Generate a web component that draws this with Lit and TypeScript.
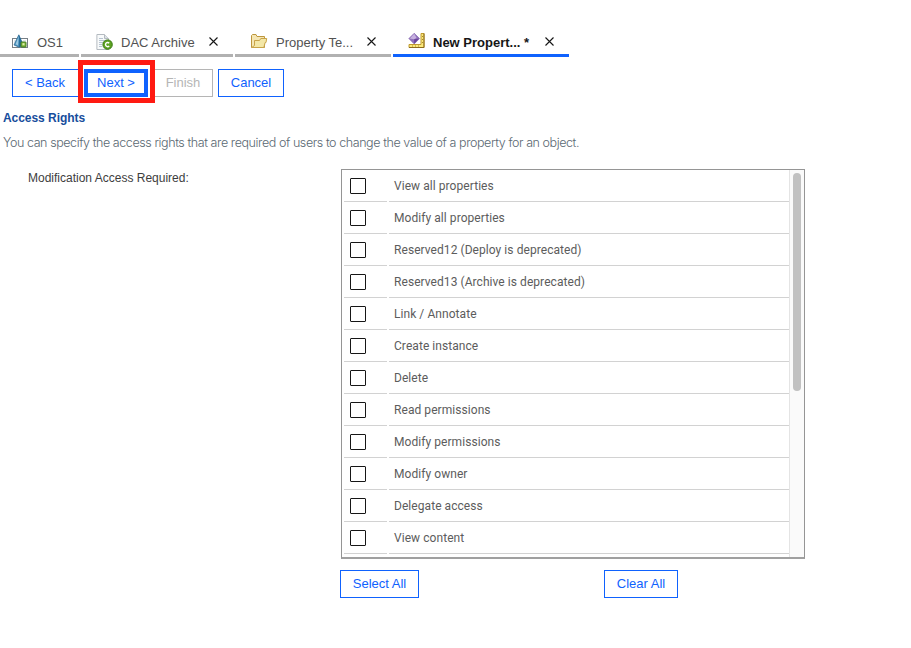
import { LitElement, html, css, svg } from "lit";
import { customElement, property } from "lit/decorators.js";

const serverIcon = svg`
  <rect x=".5" y="4.5" width="15" height="9" fill="#fff" stroke="#777f86"/>
  <path d="M2 6h3v3H2zM11 6h3v1h-3z" fill="#dfe6ea"/>
  <path d="M2 11L6.8 .8L11.2 11L7 13.2Z" fill="#4c92bd" stroke="#28668f" stroke-width=".7"/>
  <path d="M7 1L11.2 11L7 13.2Z" fill="#276c99"/>
  <path d="M6.6 2.4L3.6 10.2L6 11.4Z" fill="#9cc9e2"/>
  <rect x="9" y="8" width="5" height="5" rx=".5" fill="#82b83e" stroke="#3f791f"/>
  <rect x="10.5" y="9.2" width="2" height="2" fill="#e0edaf"/>`;
const docIcon = svg`
  <path d="M.9 .5H8.5L12.5 4.5V15.5H.9Z" fill="#f8fafb" stroke="#b4bac0"/>
  <path d="M8.5 .5V4.5H12.5" fill="#dce2e6" stroke="#b4bac0"/>
  <path d="M3 4.5H7M3 6.5H9M3 8.5H7M3 10.5H6M3 12.5H6" stroke="#b6c3d0"/>
  <circle cx="11.6" cy="10.6" r="4.7" fill="#5da321" stroke="#397914"/>
  <path d="M13.2 9.2A2.1 2.1 0 1 0 13.2 12" fill="none" stroke="#fff" stroke-width="1.4"/>`;
const folderIcon = svg`
  <path d="M.5 13.5V1.5L1.5 .5H5L6 2.5H13.5V13.5Z" fill="#f5e6b4" stroke="#bd963c"/>
  <path d="M.7 13.5L3.5 11.5V6.5H8.5L9.8 4.5H15.7L15 8.5H14.2L12.8 13.5Z" fill="#f3e7a7" stroke="#c8a348"/>`;
const templateIcon = svg`
  <path d="M13 .5H16V14.5H1V11.5H13Z" fill="#fbe97a" stroke="#c09a2e"/>
  <path d="M16 .5V14.5H1" fill="none" stroke="#8d6c1c"/>
  <path d="M4.5 12.5V13.5M7.5 12.5V13.5M10.5 12.5V13.5M14 3.5H15M14 6.5H15M14 9.5H15" stroke="#a88930"/>
  <path d="M6.2 .3L11.5 5.6L6.2 10.9L.9 5.6Z" fill="#9272bd" stroke="#7252a4" stroke-width=".6"/>
  <path d="M6.2 .8L8.5 4.8L6.2 6.2L1.7 5.4Z" fill="#c7b1e0"/>
  <path d="M6.2 6.2L11.1 5.6L6.2 10.5Z" fill="#694599"/>`;

@customElement("editor-tab")
class EditorTab extends LitElement {
  @property() label = "";
  @property({ attribute: false }) icon: unknown;
  @property({ type: Boolean, reflect: true }) active = false;
  @property({ type: Boolean }) closable = false;
  static styles = css`
    :host { display: flex; box-sizing: border-box; height: 57px; padding-top: 28px; border-bottom: 3px solid #b1b1b1;
      font: 13px/30px "Liberation Sans", sans-serif; color: #525252; white-space: nowrap; }
    :host([active]) { border-color: #0f62fe; color: #161616; font-weight: bold; }
    .icon { width: 17px; height: 16px; margin-top: 6px; }
    :host([active]) .icon { margin-top: 5px; }
    .label { margin-left: 8px; flex: 1; }
    .close { width: 9px; height: 9px; margin: 9px 15.5px 0 0; }
    .close path { stroke: #161616; stroke-width: 1.1; }
  `;
  render() {
    return html`<svg class="icon" viewBox="0 0 17 16">${this.icon}</svg>
      <span class="label">${this.label}</span>
      ${this.closable ? html`<svg class="close" viewBox="0 0 9 9"><path d="M.5 .5L8.5 8.5M8.5 .5L.5 8.5"/></svg>` : ""}`;
  }
}

const rights = ["View all properties", "Modify all properties", "Reserved12 (Deploy is deprecated)",
  "Reserved13 (Archive is deprecated)", "Link / Annotate", "Create instance", "Delete", "Read permissions",
  "Modify permissions", "Modify owner", "Delegate access", "View content"];

@customElement("app-root")
class AppRoot extends LitElement {
  static styles = css`
    :host { display: block; width: 911px; height: 648px; overflow: hidden; background: #fff; font-family: "Liberation Sans", sans-serif; }
    .tabs { display: flex; gap: 2px; height: 57px; }
    .server { width: 79px; padding-left: 12px; }
    .archive { width: 152px; padding-left: 15px; }
    .folder { width: 156px; padding-left: 16px; }
    .template { width: 176px; padding-left: 15px; }
    .actions { display: flex; height: 28px; margin: 12px 0 0 12px; }
    button { box-sizing: border-box; height: 28px; padding: 0; border: 1px solid #0f62fe; border-radius: 0; background: #fff; color: #0f62fe;
      font: 13px/26px "Liberation Sans", sans-serif; white-space: nowrap; }
    .back { width: 68px; padding-right: 2px; }
    .next { position: relative; width: 64px; margin-left: 4px; border-width: 4px; line-height: 20px; }
    .next::after { content: ""; position: absolute; inset: -13px -11px -10px -10px; border: 5px solid #ff1a12; }
    .finish { width: 61px; margin-left: 4px; padding-left: 1px; border-color: #b5b5b5; color: #b5b5b5; }
    .cancel { width: 66px; margin-left: 5px; }
    h1 { margin: 13px 0 0 3px; font-size: 12px; line-height: 16px; letter-spacing: -.05px; color: #164d9c; }
    .intro { margin: 8px 0 0 3px; font: 300 12.5px/18px Inter, sans-serif; letter-spacing: -.42px; color: #5a6872; white-space: nowrap; }
    .form { display: flex; margin-top: 17px; }
    .field { width: 313px; padding-left: 28px; font-size: 12px; line-height: 18px; color: #3d3d3d; }
    .list { box-sizing: border-box; display: flex; width: 464px; height: 390px; border: 1px solid #959595; border-bottom: 2px solid #a0a0a0; }
    .rows { width: 445px; margin-left: 2px; }
    .row { display: grid; grid-template-columns: 43px 400.5px; gap: 1.5px; height: 32px; }
    .cell { box-sizing: border-box; border-bottom: 1px solid #d2d2d2; }
    .check { box-sizing: border-box; width: 16px; height: 16px; margin: 8px 0 0 6px; border: 1px solid #161616; border-radius: 1px; }
    .name { padding-left: 5.5px; font: 12px/33px Roboto, sans-serif; letter-spacing: .06px; color: #5c5c5c; }
    .name span { display: block; height: 31px; }
    .track { box-sizing: border-box; width: 15px; padding: 3px 0 0 3px; border-left: 1px solid #e4e4e4; background: #fafafa; }
    .thumb { width: 8px; height: 218px; border-radius: 4px; background: #c1c1c1; }
    .footer { display: flex; margin: 11px 0 0 340px; }
    .all { width: 79px; }
    .clear { width: 74px; margin-left: 185px; }
  `;
  render() {
    return html`
      <nav class="tabs">
        <editor-tab class="server" label="OS1" .icon=${serverIcon}></editor-tab>
        <editor-tab class="archive" label="DAC Archive" .icon=${docIcon} closable></editor-tab>
        <editor-tab class="folder" label="Property Te..." .icon=${folderIcon} closable></editor-tab>
        <editor-tab class="template" label="New Propert... *" .icon=${templateIcon} closable active></editor-tab>
      </nav>
      <div class="actions">
        <button class="back">&lt; Back</button><button class="next">Next &gt;</button>
        <button class="finish">Finish</button><button class="cancel">Cancel</button>
      </div>
      <h1>Access Rights</h1>
      <p class="intro">You can specify the access rights that are required of users to change the value of a property for an object.</p>
      <div class="form">
        <div class="field">Modification Access Required:</div>
        <div class="list">
          <div class="rows">${rights.map(r => html`<div class="row"><div class="cell"><div class="check"></div></div><div class="cell name"><span>${r}</span></div></div>`)}</div>
          <div class="track"><div class="thumb"></div></div>
        </div>
      </div>
      <div class="footer"><button class="all">Select All</button><button class="clear">Clear All</button></div>`;
  }
}
